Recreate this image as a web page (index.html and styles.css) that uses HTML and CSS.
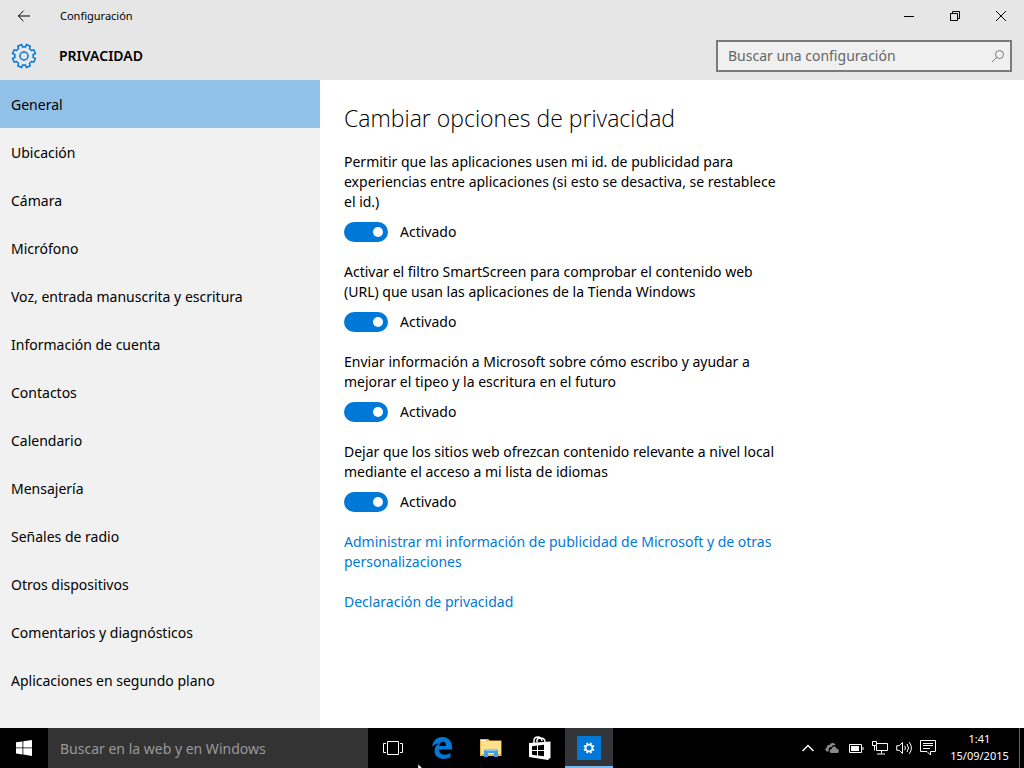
FILE: index.html
```html
<!DOCTYPE html>
<html lang="es">
<head>
<meta charset="utf-8">
<meta name="viewport" content="width=device-width, initial-scale=1">
<title>Configuración</title>
<link rel="stylesheet" href="styles.css">
</head>
<body>
<div class="window">
  <header class="header">
    <div class="titlebar">
      <button class="back" type="button" aria-label="Atrás">
        <svg width="14" height="12" viewBox="0 0 14 12"><path d="M13 6H1.5M6.5.8 1.3 6l5.2 5.2"/></svg>
      </button>
      <span class="app-name">Configuración</span>
      <div class="controls">
        <button type="button" aria-label="Minimizar"><svg width="12" height="12" viewBox="0 0 12 12"><path d="M1 6.5h10"/></svg></button>
        <button type="button" aria-label="Restaurar"><svg width="12" height="12" viewBox="0 0 12 12"><path d="M1.5 3.5h7v7h-7zM3.5 3.500v-2h7v7h-2"/></svg></button>
        <button type="button" aria-label="Cerrar"><svg width="12" height="12" viewBox="0 0 12 12"><path d="M1 1l10 10M11 1 1 11"/></svg></button>
      </div>
    </div>
    <div class="section-bar">
      <svg class="section-icon" width="26" height="26" viewBox="-13 -13 26 26"><path d="M9.1 1.4 11.4 2.4 9.8 6.2 7.4 5.5 5.5 7.4 6.2 9.8 2.4 11.4 1.4 9.1H-1.4L-2.4 11.4-6.2 9.8-5.5 7.4-7.4 5.5-9.8 6.2-11.4 2.4-9.1 1.4V-1.4L-11.4-2.4-9.8-6.2-7.4-5.5-5.5-7.4-6.2-9.8-2.4-11.4-1.4-9.1H1.4L2.4-11.4 6.2-9.8 5.500-7.4 7.4-5.5 9.8-6.2 11.4-2.4 9.1-1.4Z"/><circle r="4"/></svg>
      <h1 class="section-name">PRIVACIDAD</h1>
      <div class="search">
        <input class="search-input" type="text" placeholder="Buscar una configuración" aria-label="Buscar una configuración">
        <svg class="search-icon" width="14" height="14" viewBox="0 0 14 14"><circle cx="8.500" cy="5.500" r="4"/><path d="M5.600 8.400 1 13"/></svg>
      </div>
    </div>
  </header>
  <div class="body">
    <nav class="nav">
      <a class="nav-item selected" href="#general">General</a>
      <a class="nav-item" href="#ubicacion">Ubicación</a>
      <a class="nav-item" href="#camara">Cámara</a>
      <a class="nav-item" href="#microfono">Micrófono</a>
      <a class="nav-item" href="#voz">Voz, entrada manuscrita y escritura</a>
      <a class="nav-item" href="#cuenta">Información de cuenta</a>
      <a class="nav-item" href="#contactos">Contactos</a>
      <a class="nav-item" href="#calendario">Calendario</a>
      <a class="nav-item" href="#mensajeria">Mensajería</a>
      <a class="nav-item" href="#radio">Señales de radio</a>
      <a class="nav-item" href="#dispositivos">Otros dispositivos</a>
      <a class="nav-item" href="#comentarios">Comentarios y diagnósticos</a>
      <a class="nav-item" href="#segundo-plano">Aplicaciones en segundo plano</a>
    </nav>
    <main class="main">
      <h2 class="title">Cambiar opciones de privacidad</h2>
      <section class="option">
        <p id="o1">Permitir que las aplicaciones usen mi id. de publicidad para experiencias entre aplicaciones (si esto se desactiva, se restablece el id.)</p>
        <label class="toggle-row"><input class="toggle" type="checkbox" role="switch" checked aria-describedby="o1">Activado</label>
      </section>
      <section class="option">
        <p id="o2">Activar el filtro SmartScreen para comprobar el contenido web (URL) que usan las aplicaciones de la Tienda Windows</p>
        <label class="toggle-row"><input class="toggle" type="checkbox" role="switch" checked aria-describedby="o2">Activado</label>
      </section>
      <section class="option">
        <p id="o3">Enviar información a Microsoft sobre cómo escribo y ayudar a mejorar el tipeo y la escritura en el futuro</p>
        <label class="toggle-row"><input class="toggle" type="checkbox" role="switch" checked aria-describedby="o3">Activado</label>
      </section>
      <section class="option">
        <p id="o4">Dejar que los sitios web ofrezcan contenido relevante a nivel local mediante el acceso a mi lista de idiomas</p>
        <label class="toggle-row"><input class="toggle" type="checkbox" role="switch" checked aria-describedby="o4">Activado</label>
      </section>
      <a class="link" href="#publicidad">Administrar mi información de publicidad de Microsoft y de otras personalizaciones</a>
      <a class="link" href="#declaracion">Declaración de privacidad</a>
    </main>
  </div>
</div>
<footer class="taskbar">
  <button class="task start" type="button" aria-label="Inicio">
    <svg width="16" height="16" viewBox="0 0 16 16" fill="#fff"><path d="M0 2.300 6.500 1.400V7.500H0zM7.300 1.300 16 0V7.500H7.300zM0 8.300H6.500V14.500L0 13.600zM7.300 8.300H16V16L7.300 14.600z"/></svg>
  </button>
  <input class="task-search" type="text" placeholder="Buscar en la web y en Windows" aria-label="Buscar en la web y en Windows">
  <div class="apps">
    <button class="task" type="button" aria-label="Vista de tareas">
      <svg width="20" height="14" viewBox="0 0 20 14" fill="none" stroke="#fff"><path d="M4.500.5h11v13h-11zM3 2.500H.5v9H3M17 2.500h2.500v9H17"/></svg>
    </button>
    <button class="task" type="button" aria-label="Microsoft Edge">
      <svg width="20" height="22" viewBox="0 0 20 22"><path fill="#0078d7" d="M0 9.700C.8 4 4.500 0 10.500 0 16.500 0 20 4.300 20 9.900V12.500H7C7.200 18.600 14.500 18.800 18.500 16V20.300C16.500 21.500 14 22 11.500 22 6 22 2.500 18.600 2.500 13.800 2.500 10.500 4.200 7.900 7.200 6.400 4 6.500 1.600 7.700 0 9.700zM7.200 9H14C14 5.900 12.700 4.700 10.800 4.700 8.900 4.700 7.500 6.400 7.200 9z"/></svg>
    </button>
    <button class="task" type="button" aria-label="Explorador de archivos">
      <svg width="22" height="18" viewBox="0 0 22 18"><path fill="#e8b84c" d="M0 0h8l2 1.500h11.500V17H0z"/><path fill="#ffe08a" d="M1 2h20v13H1z"/><path fill="#fff" d="M1 1h5v1H1z"/><path fill="#3f9fe0" d="M4 18v-6q0-2 2-2h10q2 0 2 2v6h-4v-4H8v4z"/><path fill="#86c8f0" d="M5 10h12v2H5z"/></svg>
    </button>
    <button class="task" type="button" aria-label="Tienda">
      <svg width="22" height="24" viewBox="0 0 22 24"><path fill="none" stroke="#fff" stroke-width="1.500" d="M5 7V4.500C5 2 7 1 9 1s3.500 1 4 4M8 6.500V4.500C8 2.800 9.500 2 11.500 2S16 3 16 6"/><path fill="#fff" d="M0 7 21.500 5.500V21.500L19 24 0 21z"/><path fill="#000" d="M3 10.200 8 9.600v4.500H3zM9 9.500l6-.8v5.400H9zM3 15h5v4.400l-5-.6zM9 15h6v5.300l-6-.8z"/></svg>
    </button>
    <button class="task active" type="button" aria-label="Configuración">
      <span class="tile"><svg width="12" height="12" viewBox="0 0 12 12"><circle cx="6" cy="6" r="3.400" stroke-width="1.800"/><path stroke-width="1.800" d="M9.400 7.400 11.100 8.100M7.400 9.400 8.100 11.100M4.600 9.400 3.900 11.100M2.600 7.400 .9 8.100M2.600 4.600 .9 3.900M4.600 2.600 3.900 .9M7.400 2.600 8.100 .9M9.400 4.600 11.100 3.900"/></svg></span>
    </button>
  </div>
  <div class="tray">
    <button type="button" aria-label="Mostrar iconos ocultos"><svg width="12" height="8" viewBox="0 0 12 8"><path stroke-width="1.500" d="M.5 7 6 1.500 11.500 7"/></svg></button>
    <button type="button" aria-label="OneDrive"><svg width="14" height="12" viewBox="0 0 14 12"><path fill="#888" stroke="none" d="M2.500 9.500C0 9.500-.3 6.500 1.700 5.700 1.500 3.500 3.500 2.700 4.500 3.200 5.500.5 9.500.2 10.500 3 8.500 2.700 7 3.500 6.500 5 4 4.800 3 7 4 9.500zM6.500 11C4.300 11 4 7.500 6.700 7 6.800 4 10.800 3.300 11.500 6.500 14.500 6.500 14.500 11 12 11z"/></svg></button>
    <button type="button" aria-label="Batería"><svg width="16" height="10" viewBox="0 0 16 10"><path d="M1.500 1.500h12v8h-12zM15 4v3"/><path fill="#fff" stroke="none" d="M3 3h8v5H3z"/></svg></button>
    <button type="button" aria-label="Red"><svg width="16" height="14" viewBox="0 0 16 14"><path d="M5 2.500h10.500v7H4.500V5M9.500 9.500v3M5 13h8M.5.500h4v4h-4zM2.500 4.500v5"/></svg></button>
    <button type="button" aria-label="Volumen"><svg width="17" height="14" viewBox="0 0 17 14"><path d="M.7 4.700h2.500L6.500 1.500v11L3.200 9.300H.7zM8.700 4.800q1.500 2.200 0 4.400M11 3q3 4 0 8M13.200 1.200q4.500 5.800 0 11.600"/></svg></button>
    <button type="button" aria-label="Centro de actividades"><svg width="16" height="16" viewBox="0 0 16 16"><path d="M.5.5h15v11h-5v3.500L7 11.500H.5zM3 3.500h10M3 5.500h10M3 8.500h7"/></svg></button>
  </div>
  <button class="clock" type="button"><time datetime="01:41">1:41</time><time datetime="2015-09-15">15/09/2015</time></button>
  <button class="show-desktop" type="button" aria-label="Mostrar escritorio"></button>
</footer>
<svg class="cursor" width="12" height="18" viewBox="0 0 12 18" aria-hidden="true"><path fill="#fff" stroke="#000" stroke-width=".5" d="M0 0V16L4 12.500 6.500 18 9 17 6.500 11.500H12z"/></svg>
</body>
</html>
```
FILE: styles.css
```css
* {
  box-sizing: border-box;
}

body {
  margin: 0;
  height: 100vh;
  display: flex;
  flex-direction: column;
  overflow: hidden;
  position: relative;
  background: #fff;
  color: #000;
  font: 14px/20px "Noto Sans", "Open Sans", sans-serif;
}

button,
input {
  font: inherit;
  color: inherit;
  margin: 0;
  padding: 0;
  border: 0;
  border-radius: 0;
  background: none;
}

svg {
  display: block;
}

.window {
  flex: 1;
  min-height: 0;
  display: flex;
  flex-direction: column;
}

.header {
  background: #e6e6e6;
}

.titlebar {
  display: flex;
  align-items: center;
  height: 32px;
}

.back,
.controls button {
  display: flex;
  align-items: center;
  justify-content: center;
  height: 32px;
  fill: none;
  stroke: #000;
}

.back {
  width: 48px;
}

.app-name {
  padding-left: 12px;
  font-size: 11px;
}

.controls {
  display: flex;
  margin-left: auto;
}

.controls button {
  width: 46px;
}

.section-bar {
  display: flex;
  align-items: center;
  height: 48px;
  padding: 0 12px 0 11px;
}

.section-icon {
  fill: none;
  stroke: #0078d7;
  stroke-width: 1.5;
}

.section-name {
  margin: 0 auto 0 22px;
  font-size: 14px;
  font-weight: 600;
}

.search {
  display: flex;
  align-items: center;
  width: 296px;
  height: 32px;
  padding: 0 5px 0 10px;
  border: 2px solid #7a7a7a;
  background: #f0f0f0;
}

.search-input {
  flex: 1;
  min-width: 0;
}

.search-input::placeholder {
  color: #666;
  opacity: 1;
}

.search-icon {
  fill: none;
  stroke: #777;
}

.body {
  flex: 1;
  min-height: 0;
  display: flex;
}

.nav {
  width: 320px;
  flex-shrink: 0;
  background: #f1f1f1;
}

.nav-item {
  display: flex;
  align-items: center;
  height: 48px;
  padding: 2px 11px 0;
  color: #000;
  text-decoration: none;
}

.nav-item.selected {
  background: #91c1e7;
}

.main {
  flex: 1;
  padding: 22px 24px;
}

.title {
  margin: 0 0 18px;
  font-family: "Open Sans", "Noto Sans", sans-serif;
  font-size: 23px;
  line-height: 32px;
  font-weight: 300;
}

.option,
.link {
  display: block;
  max-width: 440px;
  margin-bottom: 20px;
}

.option p {
  margin: 0 0 10px;
}

.toggle-row {
  display: flex;
  align-items: center;
  gap: 12px;
}

.toggle {
  appearance: none;
  display: flex;
  align-items: center;
  width: 44px;
  height: 20px;
  padding: 0 5px;
  border-radius: 10px;
  background: #0078d7;
}

.toggle::before {
  content: "";
  width: 10px;
  height: 10px;
  border-radius: 50%;
  background: #fff;
}

.toggle:checked {
  justify-content: flex-end;
}

.toggle:not(:checked) {
  background: #777;
}

.link {
  color: #0078d7;
  text-decoration: none;
}

.taskbar {
  display: flex;
  height: 40px;
  background: #000;
  color: #fff;
}

.task {
  display: flex;
  align-items: center;
  justify-content: center;
  width: 48px;
  height: 40px;
}

.task-search {
  width: 320px;
  padding: 2px 12px 0;
  background: #333;
}

.task-search::placeholder {
  color: #999;
  opacity: 1;
}

.apps {
  display: flex;
  gap: 1px;
  padding-left: 1px;
}

.task.active {
  padding-top: 2px;
  background: #333539;
  border-bottom: 2px solid #76b9ed;
}

.tile {
  display: flex;
  align-items: center;
  justify-content: center;
  width: 24px;
  height: 24px;
  background: #0078d7;
  fill: none;
  stroke: #fff;
}

.tray {
  display: flex;
  margin-left: auto;
}

.tray button {
  display: flex;
  align-items: center;
  justify-content: center;
  width: 24px;
  fill: none;
  stroke: #fff;
}

.clock {
  display: flex;
  flex-direction: column;
  align-items: center;
  justify-content: center;
  width: 79px;
  padding-bottom: 2px;
  font-size: 11px;
  line-height: 17px;
}

.show-desktop {
  width: 5px;
  border-left: 1px solid #666;
}

.cursor {
  position: absolute;
  left: 418px;
  top: 764px;
}
```
